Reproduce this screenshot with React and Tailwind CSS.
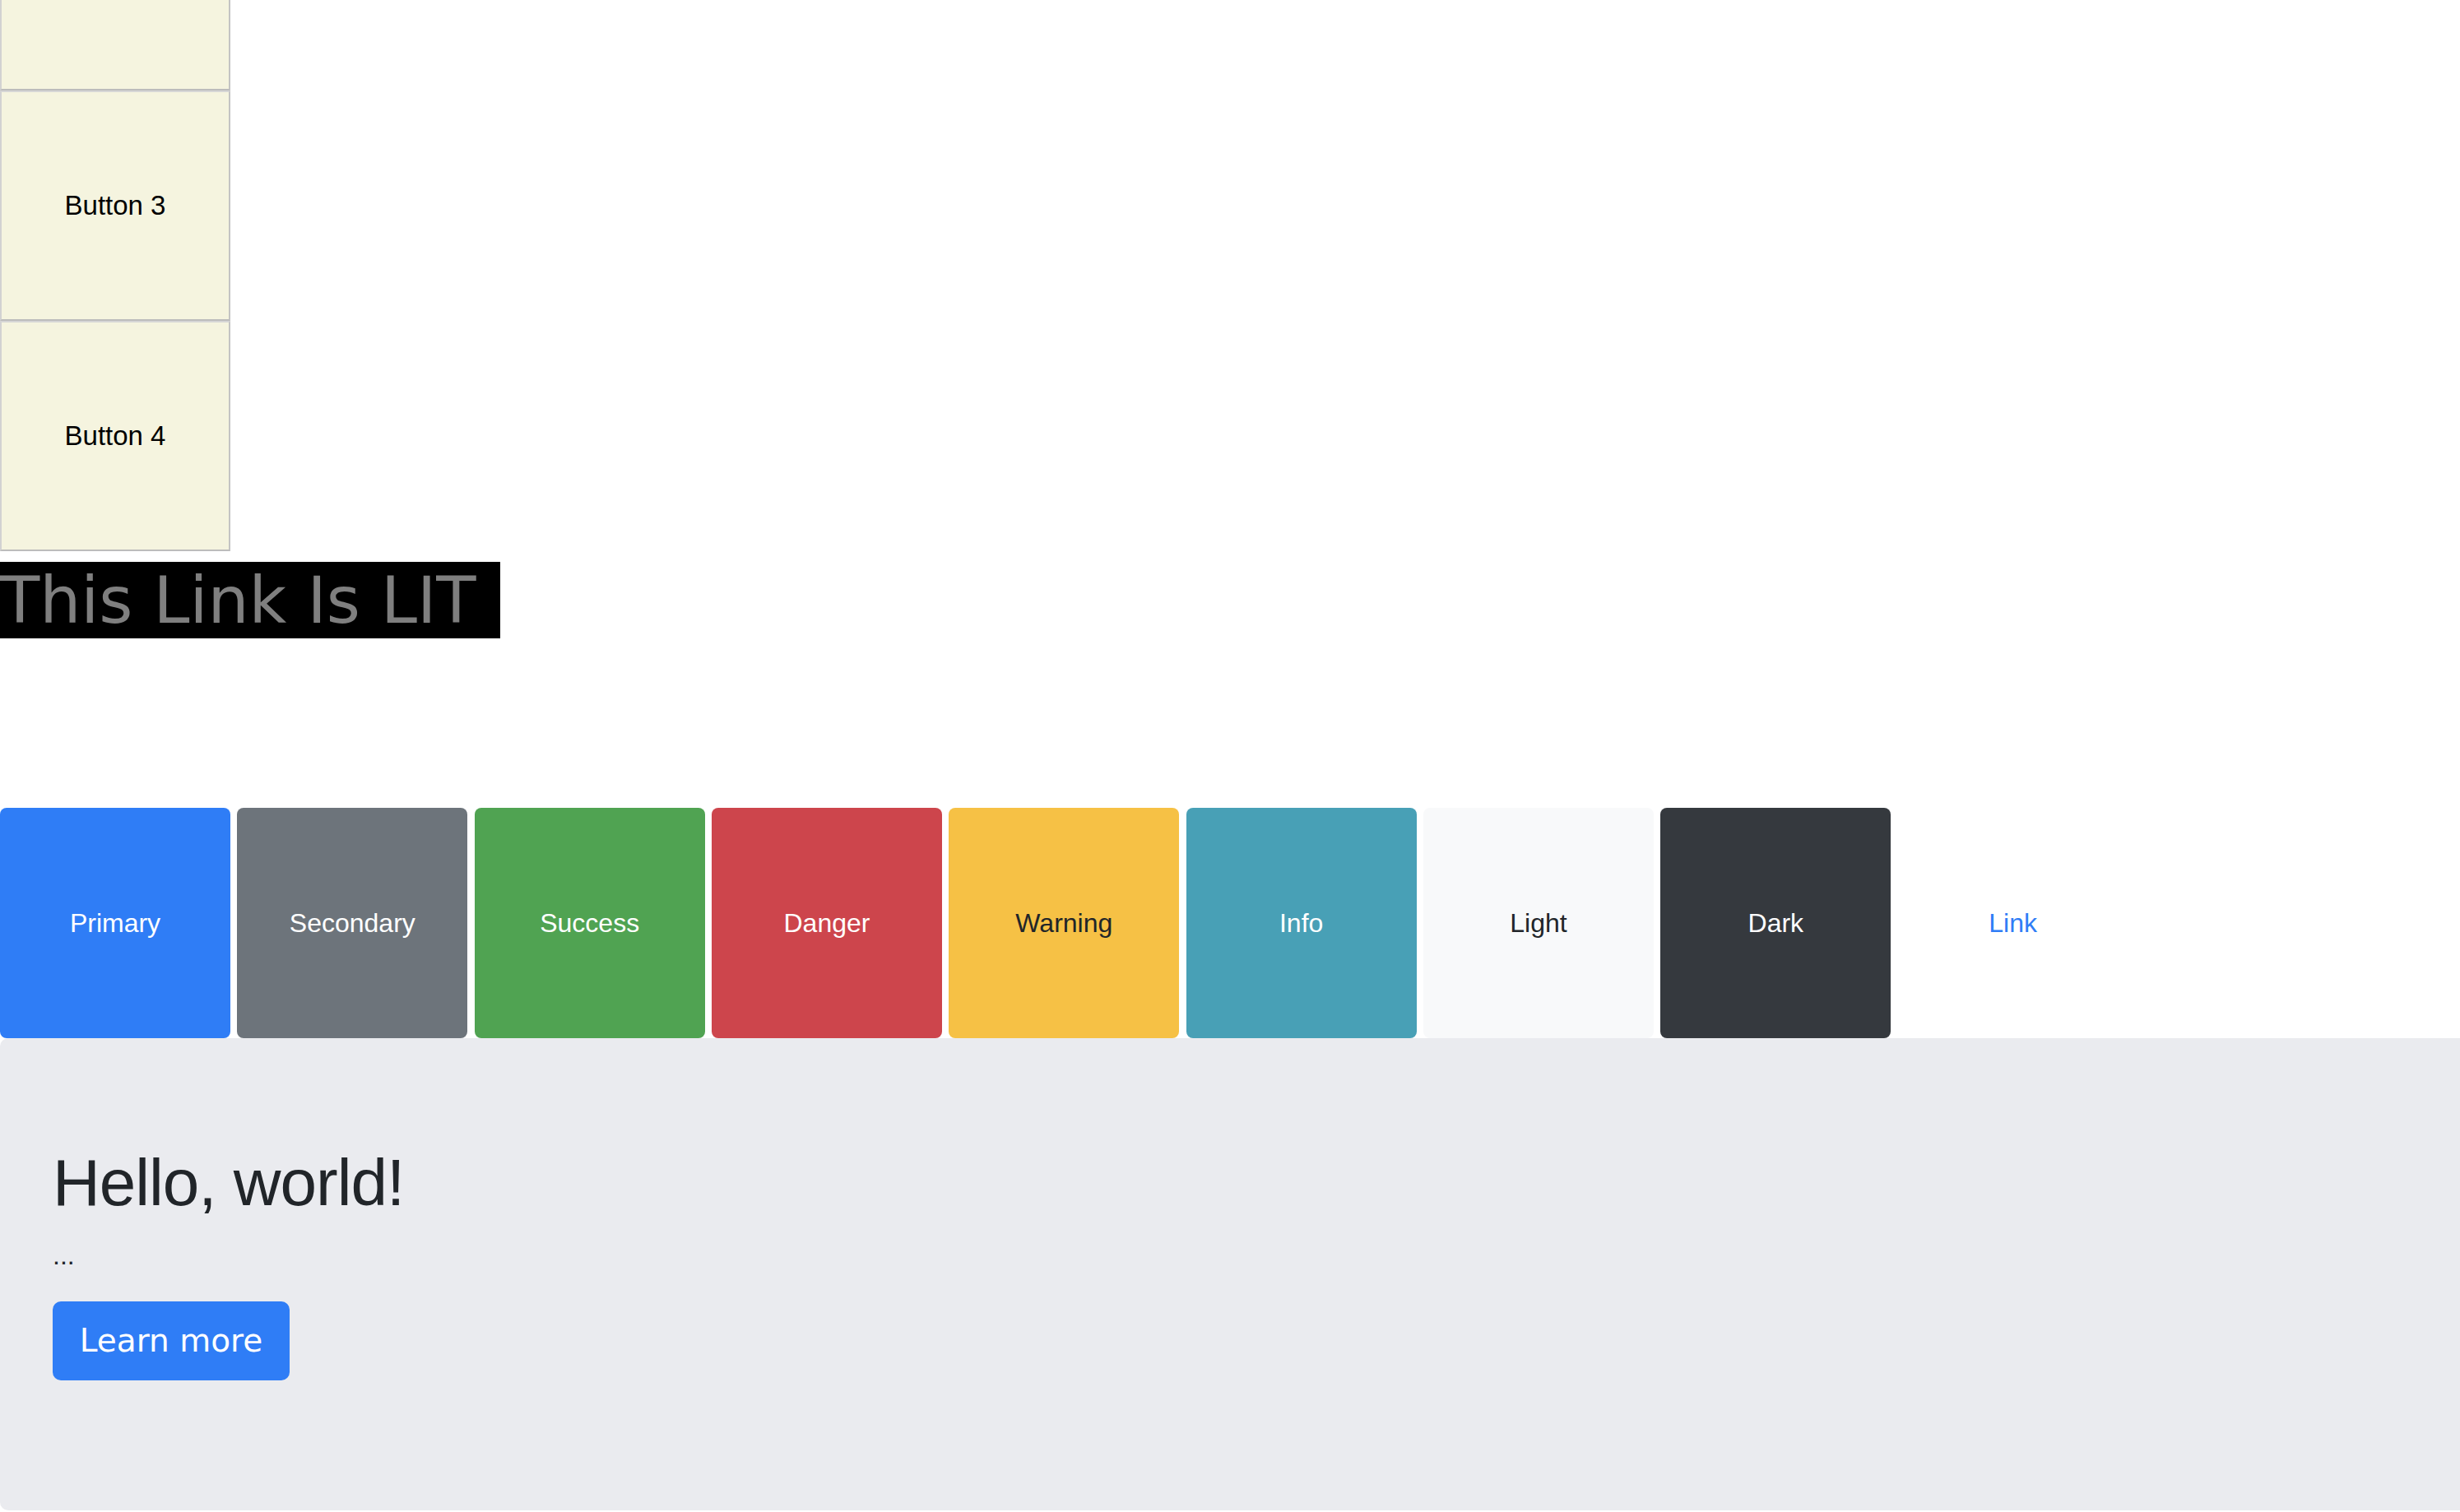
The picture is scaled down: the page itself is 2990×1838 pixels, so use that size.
import React from "react";

const sans = { fontFamily: '"Liberation Sans", Arial, sans-serif' };

function BeigeBox({ children, className = "" }) {
  return (
    <div
      className={`w-[280px] bg-[#f5f4df] border-2 border-t-[#d6d6d6] border-l-[#d2d2d2] border-r-[#c4c4c4] border-b-[#bcbcbc] flex items-center justify-center text-[33px] text-black font-['Liberation_Sans',Arial,sans-serif] ${className}`}
    >
      {children}
    </div>
  );
}

const buttons = [
  { label: "Primary", cls: "bg-[#2f7df6] text-white" },
  { label: "Secondary", cls: "bg-[#6d747b] text-white" },
  { label: "Success", cls: "bg-[#50a352] text-white" },
  { label: "Danger", cls: "bg-[#cd454c] text-white" },
  { label: "Warning", cls: "bg-[#f6c145] text-[#212529]" },
  { label: "Info", cls: "bg-[#48a0b6] text-white" },
  { label: "Light", cls: "bg-[#f8f9fa] text-[#212529]" },
  { label: "Dark", cls: "bg-[#35393e] text-white" },
  { label: "Link", cls: "bg-transparent text-[#2f7df6]" },
];

export default function App() {
  return (
    <div className="w-[2990px] min-h-[1838px] bg-white overflow-hidden flex flex-col items-start">
      <div className="w-[280px] h-[110px] bg-[#f5f4df] border-l-2 border-r-2 border-b-2 border-l-[#d2d2d2] border-r-[#c4c4c4] border-b-[#bcbcbc]" />
      <BeigeBox className="h-[280px]">Button 3</BeigeBox>
      <BeigeBox className="h-[280px]">Button 4</BeigeBox>

      <div className="mt-[13px] w-[608px] h-[93px] bg-black text-[#7f7f7f] text-[79px] leading-[95px] whitespace-nowrap overflow-hidden font-['DejaVu_Sans',Verdana,sans-serif]">
        This Link Is LIT
      </div>

      <div className="mt-[206px] flex gap-[8.33px]">
        {buttons.map((b) => (
          <div
            key={b.label}
            className={`w-[280px] h-[280px] rounded-[8px] flex items-center justify-center text-[32px] font-['Liberation_Sans',Arial,sans-serif] ${b.cls}`}
          >
            {b.label}
          </div>
        ))}
      </div>

      <div className="w-full h-[574px] bg-[#eaebef] rounded-l-[10px] pt-[128px] px-[64px]" style={sans}>
        <h1 className="text-[80px] leading-[96px] tracking-[-1px] text-[#212529] mb-[16px] font-['Liberation_Sans',Arial,sans-serif]">
          Hello, world!
        </h1>
        <p className="text-[32px] leading-[48px] text-[#212529] mb-[32px]">...</p>
        <div className="w-[288px] h-[96px] rounded-[10px] bg-[#2f7df6] text-white flex items-center justify-center text-[39px] font-['DejaVu_Sans',Verdana,sans-serif]">
          Learn more
        </div>
      </div>
    </div>
  );
}
